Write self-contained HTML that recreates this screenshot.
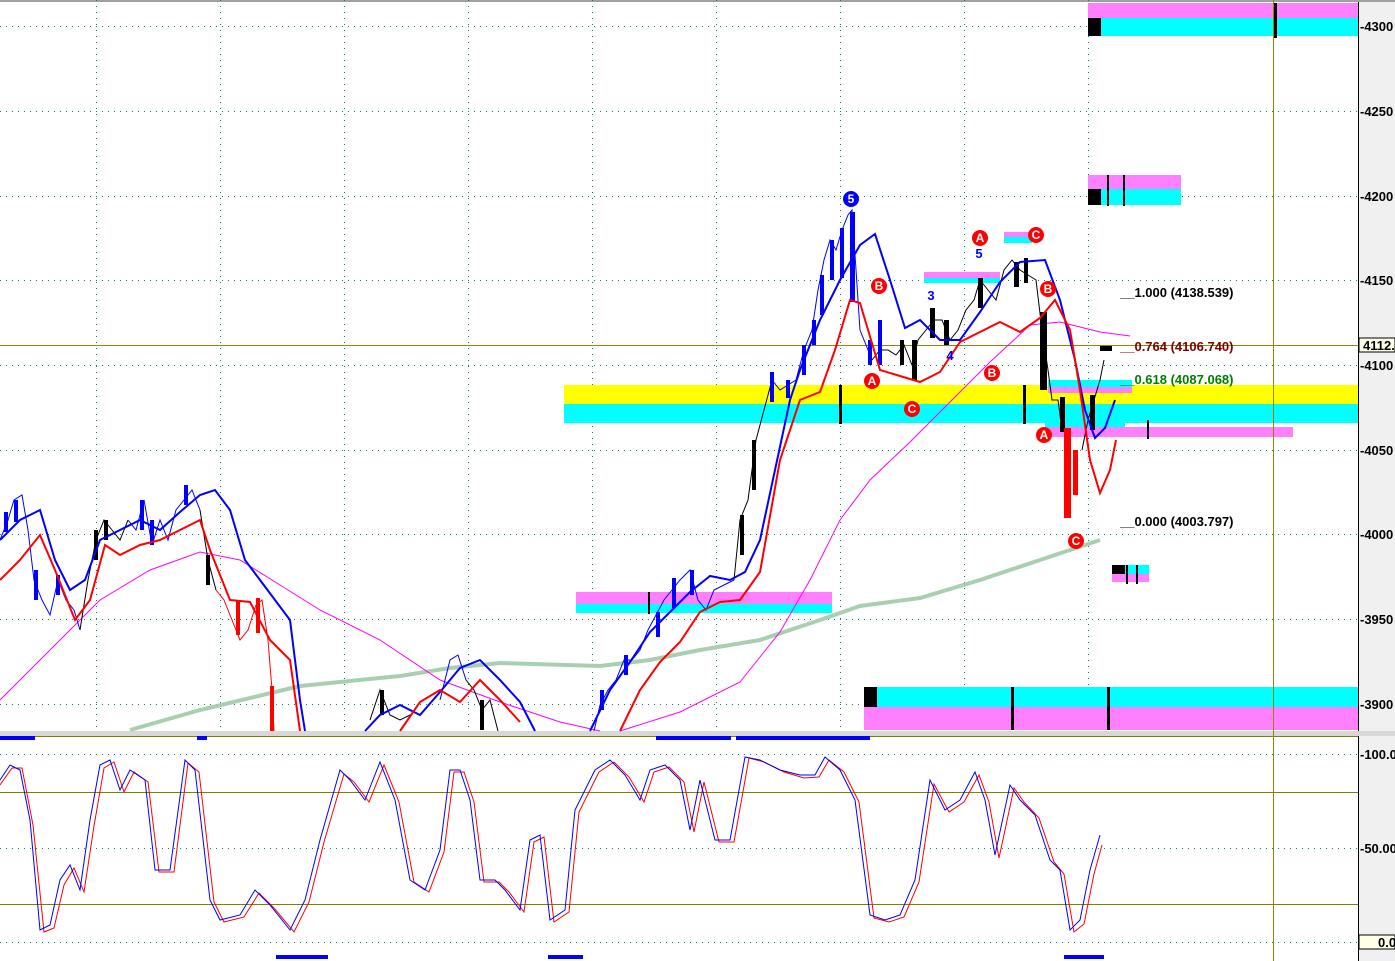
<!DOCTYPE html>
<html><head><meta charset="utf-8"><style>
html,body{margin:0;padding:0;background:#fff;}
svg{display:block;font-family:"Liberation Sans",sans-serif;}
</style></head><body>
<svg width="1395" height="961" viewBox="0 0 1395 961" xmlns="http://www.w3.org/2000/svg">
<rect width="1395" height="961" fill="#fff"/>
<rect x="1358" y="0" width="37" height="961" fill="#f0f0f0"/>
<line x1="1358.5" y1="0" x2="1358.5" y2="961" stroke="#000"/>
<rect x="0" y="0" width="1395" height="2" fill="#a0a0a0"/>
<rect x="0" y="731" width="1395" height="5" fill="#d8d8d8"/>
<line x1="0" y1="736.5" x2="1358" y2="736.5" stroke="#808000"/>
<g stroke="#008080" stroke-dasharray="1 5" stroke-width="1">
<line x1="0" y1="26.5" x2="1358" y2="26.5"/><line x1="0" y1="111.5" x2="1358" y2="111.5"/>
<line x1="0" y1="196.5" x2="1358" y2="196.5"/><line x1="0" y1="280.5" x2="1358" y2="280.5"/>
<line x1="0" y1="365.5" x2="1358" y2="365.5"/><line x1="0" y1="450.5" x2="1358" y2="450.5"/>
<line x1="0" y1="534.5" x2="1358" y2="534.5"/><line x1="0" y1="619.5" x2="1358" y2="619.5"/>
<line x1="0" y1="704.5" x2="1358" y2="704.5"/>
<line x1="0" y1="754.5" x2="1358" y2="754.5"/><line x1="0" y1="848.5" x2="1358" y2="848.5"/>
<line x1="0" y1="942.5" x2="1358" y2="942.5"/>
<line x1="96.5" y1="0" x2="96.5" y2="731"/><line x1="220.5" y1="0" x2="220.5" y2="731"/>
<line x1="344.5" y1="0" x2="344.5" y2="731"/><line x1="468.5" y1="0" x2="468.5" y2="731"/>
<line x1="592.5" y1="0" x2="592.5" y2="731"/><line x1="716.5" y1="0" x2="716.5" y2="731"/>
<line x1="840.5" y1="0" x2="840.5" y2="731"/><line x1="964.5" y1="0" x2="964.5" y2="731"/>
<line x1="1088.5" y1="0" x2="1088.5" y2="731"/>
</g>
<rect x="1088" y="3" width="270" height="15" fill="#ff80ff"/>
<rect x="1088" y="18" width="270" height="18" fill="#00ffff"/>
<rect x="1088" y="18" width="13" height="18" fill="#000"/>
<rect x="1274" y="3" width="3" height="35" fill="#000"/>
<rect x="1088" y="175" width="93" height="14" fill="#ff80ff"/>
<rect x="1088" y="189" width="93" height="16" fill="#00ffff"/>
<rect x="1088" y="189" width="13" height="16" fill="#000"/>
<rect x="1107" y="175" width="2" height="31" fill="#000"/><rect x="1123" y="175" width="2" height="31" fill="#000"/>
<rect x="924" y="272" width="76" height="6" fill="#ff80ff"/><rect x="924" y="278" width="76" height="5" fill="#00ffff"/>
<rect x="1004" y="232" width="28" height="5" fill="#ff80ff"/><rect x="1004" y="237" width="28" height="6" fill="#00ffff"/>
<rect x="564" y="385" width="794" height="19" fill="#ffff00"/>
<rect x="564" y="404" width="794" height="19" fill="#00ffff"/>
<rect x="1048" y="380" width="84" height="7" fill="#00ffff"/><rect x="1048" y="387" width="84" height="6" fill="#ff80ff"/>
<rect x="1045" y="427" width="248" height="10" fill="#ff80ff"/>
<rect x="1045" y="423" width="80" height="4" fill="#00ffff"/>
<rect x="839" y="385" width="3" height="39" fill="#000"/><rect x="1023" y="385" width="3" height="39" fill="#000"/>
<rect x="1147" y="420" width="2" height="19" fill="#000"/>
<rect x="576" y="592" width="256" height="12" fill="#ff80ff"/><rect x="576" y="604" width="256" height="9" fill="#00ffff"/>
<rect x="648" y="592" width="2" height="22" fill="#000"/>
<rect x="1112" y="565" width="37" height="9" fill="#00ffff"/><rect x="1112" y="574" width="37" height="8" fill="#ff80ff"/>
<rect x="1112" y="565" width="13" height="9" fill="#000"/>
<rect x="1126" y="565" width="2" height="19" fill="#000"/><rect x="1136" y="565" width="2" height="19" fill="#000"/>
<rect x="864" y="687" width="494" height="20" fill="#00ffff"/><rect x="864" y="707" width="494" height="23" fill="#ff80ff"/>
<rect x="864" y="687" width="13" height="20" fill="#000"/>
<rect x="1011" y="687" width="3" height="43" fill="#000"/><rect x="1107" y="687" width="3" height="43" fill="#000"/>
<rect x="1100" y="345" width="12" height="6" fill="#000"/>
<line x1="1273.5" y1="0" x2="1273.5" y2="961" stroke="#8a8a00"/>
<line x1="0" y1="345.5" x2="1358" y2="345.5" stroke="#8a8a00"/>
<line x1="0" y1="792.5" x2="1358" y2="792.5" stroke="#808000"/>
<line x1="0" y1="904.5" x2="1358" y2="904.5" stroke="#808000"/>
<polyline fill="none" stroke="#a8d0b0" stroke-width="4" points="130,730 200,710 300,686 400,676 450,668 500,663 600,666 650,660 700,650 760,640 820,620 860,606 920,598 980,580 1040,560 1100,540"/>
<polyline fill="none" stroke="#ff00ff" stroke-width="1" points="0,700 20,680 60,640 100,600 150,570 200,552 240,560 280,585 320,610 380,640 440,680 500,702 560,722 600,731"/>
<polyline fill="none" stroke="#ff00ff" stroke-width="1" points="620,731 680,712 740,682 780,632 810,580 840,520 870,480 910,442 950,402 990,362 1030,325 1060,322 1100,332 1130,336"/>
<g fill="none" stroke-width="1">
<polyline stroke="#0000ff" points="0,540 8,520 14,500 22,495 28,530 34,580 42,600 50,615 58,580 66,600 74,610 80,630"/>
<polyline stroke="#000" points="80,630 88,580 96,540 104,520 112,530 120,540 128,520"/>
<polyline stroke="#0000ff" points="128,520 136,530 144,500 152,545 160,520 168,540 176,510 184,500 192,490 200,510"/>
<polyline stroke="#000" points="200,510 208,560 216,590"/>
<polyline stroke="#ff0000" points="216,590 224,600 232,620 240,640 248,630 256,605 262,600 268,640 272,690 274,731"/>
<polyline stroke="#000" points="370,720 380,690 390,715 400,720 410,715"/>
<polyline stroke="#0000ff" points="440,700 450,660 458,655 466,680"/>
<polyline stroke="#000" points="466,680 474,690 482,710 490,700 498,731"/>
<polyline stroke="#0000ff" points="594,731 600,705 608,690 616,680 624,660 632,660 640,650 648,630 656,615 664,600 672,590 680,580 690,570 698,600 706,610 714,590 724,585 734,580"/>
<polyline stroke="#000" points="734,580 740,520 748,500 756,440 764,410 772,380"/>
<polyline stroke="#0000ff" points="772,380 780,390 788,385 796,380 804,350 812,330 818,290 824,260 830,240 836,250 842,230 848,215 852,210 856,270 860,330 866,345 872,360"/>
<polyline stroke="#000" points="872,360 880,350 888,350 896,355 904,345 912,365 918,340 926,330 934,320 942,320 950,340 958,330 966,310 974,300 980,280 988,290 996,300 1004,270 1012,260 1020,270 1028,275 1036,280 1042,330 1048,370 1052,400 1058,400 1062,430"/>
<polyline stroke="#000" points="1082,450 1088,420 1094,400 1100,380 1104,360"/>
</g>
<!-- candle bodies -->
<g fill="#0000ff">
<rect x="4" y="512" width="4" height="20"/><rect x="14" y="500" width="4" height="22"/><rect x="34" y="570" width="4" height="30"/><rect x="56" y="575" width="4" height="20"/>
<rect x="140" y="500" width="4" height="30"/><rect x="150" y="520" width="4" height="25"/><rect x="184" y="485" width="4" height="20"/>
<rect x="600" y="690" width="4" height="20"/><rect x="624" y="655" width="4" height="20"/><rect x="656" y="612" width="4" height="25"/><rect x="672" y="578" width="4" height="30"/><rect x="690" y="570" width="4" height="25"/>
<rect x="770" y="372" width="4" height="30"/><rect x="786" y="380" width="4" height="18"/><rect x="802" y="345" width="4" height="30"/><rect x="812" y="320" width="4" height="25"/><rect x="820" y="275" width="4" height="40"/><rect x="830" y="240" width="4" height="40"/><rect x="840" y="228" width="4" height="50"/>
<rect x="868" y="340" width="4" height="25"/><rect x="878" y="320" width="4" height="45"/>
</g>
<g fill="#000">
<rect x="94" y="530" width="4" height="30"/><rect x="104" y="520" width="4" height="20"/><rect x="206" y="555" width="4" height="30"/>
<rect x="380" y="690" width="4" height="25"/><rect x="480" y="700" width="4" height="30"/>
<rect x="740" y="515" width="4" height="40"/><rect x="752" y="440" width="4" height="50"/>
<rect x="900" y="340" width="4" height="25"/><rect x="912" y="340" width="5" height="40"/><rect x="930" y="308" width="5" height="30"/><rect x="944" y="320" width="5" height="25"/>
<rect x="978" y="278" width="5" height="30"/><rect x="1014" y="262" width="5" height="25"/><rect x="1024" y="258" width="4" height="25"/>
<rect x="1060" y="397" width="5" height="35"/><rect x="1090" y="395" width="5" height="35"/>
</g>
<rect x="1040" y="312" width="7" height="78" fill="#000"/>
<rect x="1064" y="428" width="7" height="90" fill="#ff0000"/>
<rect x="1073" y="450" width="5" height="45" fill="#ff0000"/>
<rect x="850" y="212" width="5" height="90" fill="#0000ff"/>
<rect x="236" y="600" width="4" height="35" fill="#ff0000"/><rect x="256" y="598" width="4" height="35" fill="#ff0000"/><rect x="270" y="686" width="4" height="45" fill="#ff0000"/>
<g fill="none" stroke-width="2">
<polyline stroke="#0000ff" points="0,540 20,520 40,510 55,560 70,590 85,580 100,540 120,530 140,520 160,530 180,512 200,495 215,490 230,510 245,560 260,580 275,600 290,620 300,700 305,731"/>
<polyline stroke="#0000ff" points="365,731 380,715 400,705 420,715 440,692 460,668 480,660 500,680 520,702 535,731"/>
<polyline stroke="#0000ff" points="590,731 610,690 630,662 650,632 670,612 690,592 710,576 730,580 745,572 760,540 775,470 790,400 800,370 820,320 840,280 860,245 875,234 890,280 905,328 920,320 940,340 960,340 980,312 1000,282 1020,262 1045,260 1060,300 1075,360 1085,410 1095,438 1105,428 1115,400"/>
<polyline stroke="#ff0000" points="0,580 20,560 40,535 55,570 75,620 90,600 105,545 120,555 140,545 160,540 180,530 200,520 210,550 230,600 250,602 270,640 290,660 300,731"/>
<polyline stroke="#ff0000" points="400,731 420,702 440,690 460,702 480,680 500,700 520,722"/>
<polyline stroke="#ff0000" points="620,731 640,690 660,662 680,642 700,612 720,602 740,600 760,572 780,460 800,400 820,392 835,350 850,300 860,303 880,370 900,376 920,382 940,372 960,342 980,332 1000,322 1020,332 1040,318 1055,300 1070,330 1080,390 1090,460 1100,493 1110,470 1116,440"/>
</g>
<g font-size="12" font-weight="bold" text-anchor="middle" fill="#fff">
<circle cx="851" cy="199" r="8" fill="#0000ff"/><text x="851" y="203">5</text>
<circle cx="872" cy="381" r="8" fill="#ff0000"/><text x="872" y="385">A</text>
<circle cx="912" cy="409" r="8" fill="#ff0000"/><text x="912" y="413">C</text>
<circle cx="879" cy="286" r="8" fill="#ff0000"/><text x="879" y="290">B</text>
<circle cx="980" cy="238" r="8" fill="#ff0000"/><text x="980" y="242">A</text>
<circle cx="992" cy="373" r="8" fill="#ff0000"/><text x="992" y="377">B</text>
<circle cx="1036" cy="235" r="8" fill="#ff0000"/><text x="1036" y="239">C</text>
<circle cx="1048" cy="289" r="8" fill="#ff0000"/><text x="1048" y="293">B</text>
<circle cx="1044" cy="435" r="8" fill="#ff0000"/><text x="1044" y="439">A</text>
<circle cx="1076" cy="541" r="8" fill="#ff0000"/><text x="1076" y="545">C</text>
</g>
<g font-size="13" font-weight="bold" fill="#0000ff" text-anchor="middle"><text x="931" y="300">3</text><text x="979" y="258">5</text><text x="950" y="360">4</text></g>
<g font-size="13" font-weight="bold">
<text x="1120" y="297" fill="#000">__1.000 (4138.539)</text>
<text x="1120" y="351" fill="#800000">__0.764 (4106.740)</text>
<text x="1120" y="384" fill="#008000">__0.618 (4087.068)</text>
<text x="1120" y="526" fill="#000">__0.000 (4003.797)</text>
</g>
<g font-size="13" font-weight="bold" fill="#000">
<text x="1360" y="31">-4300</text><text x="1360" y="116">-4250</text><text x="1360" y="201">-4200</text>
<text x="1360" y="285">-4150</text><text x="1360" y="370">-4100</text><text x="1360" y="455">-4050</text>
<text x="1360" y="539">-4000</text><text x="1360" y="624">-3950</text><text x="1360" y="709">-3900</text>
<text x="1360" y="759">-100.0</text><text x="1360" y="853">-50.00</text>
</g>
<rect x="1359" y="338" width="36" height="14" fill="#ffffe8" stroke="#000"/>
<text x="1363" y="350" font-size="13" font-weight="bold">4112.</text>
<rect x="1359" y="935" width="36" height="14" fill="#ffffe8" stroke="#000"/>
<text x="1378" y="947" font-size="13" font-weight="bold">0.0</text>
<polyline fill="none" stroke="#ff0000" stroke-width="1" points="0,785 12,768 22,768 33,825 44,932 54,928 64,885 74,868 84,892 94,826 104,768 114,762 124,792 134,772 148,782 159,872 174,872 188,763 199,772 214,902 224,922 244,917 259,893 274,908 294,932 309,902 324,842 344,774 354,782 369,802 384,765 399,802 414,882 429,892 444,852 454,772 464,772 474,802 484,882 499,882 509,892 524,912 534,842 544,837 554,922 569,912 579,812 599,772 614,762 629,777 644,802 654,772 669,767 684,782 694,832 704,782 719,842 734,842 749,758 764,762 784,772 804,778 819,777 829,760 844,772 859,802 874,918 889,922 904,917 919,882 934,784 949,812 964,802 979,775 989,802 999,858 1014,788 1024,802 1039,818 1054,862 1064,874 1074,932 1084,924 1094,874 1102,845"/>
<polyline fill="none" stroke="#0000ff" stroke-width="1" points="0,780 10,765 20,770 30,820 40,930 50,925 60,880 70,865 80,890 90,820 100,765 110,760 120,790 130,770 145,780 155,870 170,870 185,760 195,770 210,900 220,920 240,915 255,890 270,905 290,930 305,900 320,840 340,770 350,780 365,800 380,762 395,800 410,880 425,890 440,850 450,770 460,770 470,800 480,880 495,880 505,890 520,910 530,840 540,835 550,920 565,910 575,810 595,770 610,760 625,775 640,800 650,770 665,765 680,780 690,830 700,780 715,840 730,840 745,757 760,760 780,770 800,775 815,775 825,757 840,770 855,800 870,915 885,920 900,915 915,880 930,780 945,810 960,800 975,772 985,800 995,855 1010,785 1020,800 1035,815 1050,860 1060,870 1070,930 1080,920 1090,870 1100,835"/>
<g fill="#0000ff">
<rect x="0" y="736" width="35" height="4"/><rect x="197" y="736" width="10" height="4"/>
<rect x="656" y="736" width="75" height="4"/><rect x="736" y="736" width="134" height="4"/>
<rect x="276" y="955" width="52" height="4"/><rect x="548" y="955" width="35" height="4"/><rect x="1064" y="955" width="40" height="4"/>
</g>
</svg>
</body></html>
